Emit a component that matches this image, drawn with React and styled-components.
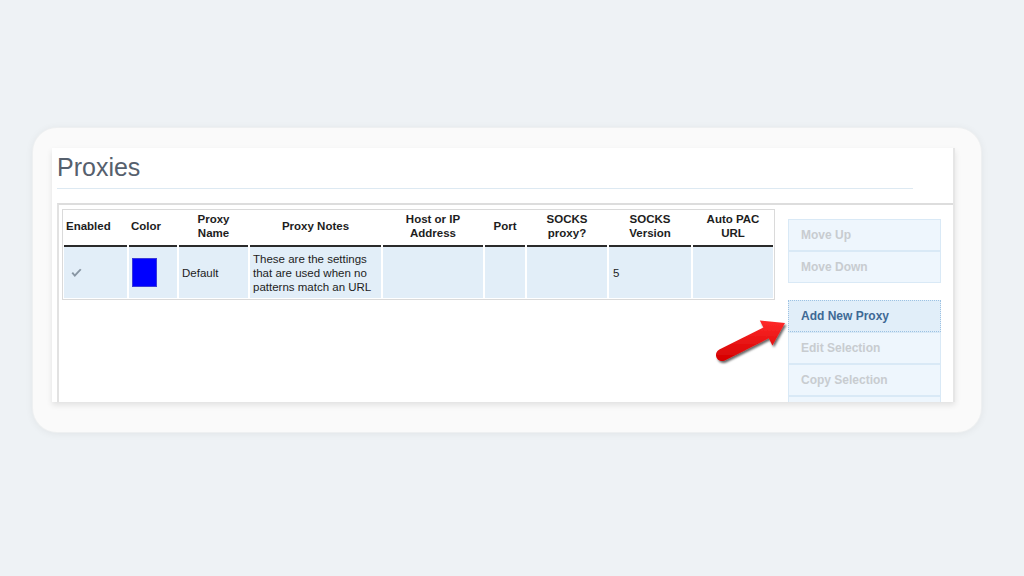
import React from "react";
import styled, { createGlobalStyle } from "styled-components";

const Global = createGlobalStyle`
  html, body { margin: 0; padding: 0; background: #eef2f5; }
  body { font-family: "Liberation Sans", Arial, sans-serif; }
`;

const Page = styled.div`
  width: 1024px;
  height: 576px;
  box-sizing: border-box;
  padding: 128px 0 0 33px;
  background: #eef2f5;
  overflow: hidden;
`;

const Frame = styled.div`
  width: 948px;
  height: 304px;
  box-sizing: border-box;
  padding: 20px 0 0 19px;
  background: #fafafa;
  border-radius: 24px;
  box-shadow: 0 0 0 1px #eef0f1, 0 1px 8px rgba(0, 0, 0, 0.07);
`;

const Shot = styled.div`
  position: relative;
  width: 903px;
  height: 254px;
  box-sizing: border-box;
  padding: 4px 0 0 5px;
  background: #ffffff;
  border-right: 2px solid #e6e6e6;
  overflow: hidden;
  box-shadow: 0 3px 6px rgba(0, 0, 0, 0.1);
`;

const Title = styled.h1`
  margin: 0;
  width: 856px;
  padding: 0 0 6px 0;
  font-family: "Liberation Sans", Arial, sans-serif;
  font-weight: normal;
  font-size: 25px;
  line-height: 30px;
  color: #56606d;
  border-bottom: 1px solid #dde9f2;
`;

const Panel = styled.div`
  margin-top: 14px;
  border-top: 2px solid #dddddd;
  border-left: 2px solid #e2e2e2;
  padding: 4px 0 0 3px;
  display: flex;
  align-items: flex-start;
  gap: 13px;
  height: 240px;
`;

const Table = styled.div`
  border: 1px solid #dadada;
  padding: 0 1px 1px 1px;
  background: #ffffff;
  display: grid;
  grid-template-columns: 63px 48px 69px 131px 100px 40px 80px 82px 80px;
  column-gap: 2px;
`;

const Head = styled.div`
  height: 35px;
  box-sizing: border-box;
  border-bottom: 2px solid #2a2a2a;
  display: flex;
  align-items: center;
  justify-content: ${(p) => (p.$left ? "flex-start" : "center")};
  padding: 0 0 4px ${(p) => (p.$left ? "2px" : "0")};
  height: 37px;
  text-align: center;
  font-size: 11.5px;
  font-weight: bold;
  line-height: 14px;
  color: #1d1d1d;
`;

const Cell = styled.div`
  height: 51px;
  box-sizing: border-box;
  background: #e2eef8;
  display: flex;
  align-items: center;
  justify-content: flex-start;
  padding-left: ${(p) => p.$pad || 3}px;
  font-size: 11.5px;
  line-height: 14px;
  color: #1d1d1d;
`;

const Swatch = styled.span`
  display: block;
  width: 25px;
  height: 29px;
  background: #0000ff;
  border: 1px solid #3a3ad8;
  box-sizing: border-box;
`;

const Buttons = styled.div`
  margin-top: 10px;
  width: 153px;
  display: flex;
  flex-direction: column;
  gap: 17px;
`;

const Group = styled.div`
  display: flex;
  flex-direction: column;
`;

const Btn = styled.div`
  height: 32px;
  box-sizing: border-box;
  padding-left: 12px;
  display: flex;
  align-items: center;
  font-size: 12px;
  font-weight: bold;
  background: ${(p) => (p.$active ? "#e1eef9" : "#eef6fd")};
  border: 1px ${(p) => (p.$active ? "dotted #9cc2e3" : "solid #d9e9f6")};
  color: ${(p) => (p.$active ? "#3e6995" : "#c8ccd0")};
`;

const Arrow = styled.svg`
  position: absolute;
  left: 666px;
  top: 170px;
  width: 74px;
  height: 50px;
  overflow: visible;
`;

const Check = () => (
  <svg width="11" height="10" viewBox="0 0 11 10">
    <path d="M0.5 5.2 L3.8 9 L10.5 1.8 L9 0.8 L3.8 6.2 L2 4 Z" fill="#8896a3" />
  </svg>
);

export default function App() {
  return (
    <Page>
      <Global />
      <Frame>
        <Shot>
          <Title>Proxies</Title>
          <Panel>
            <Table>
              <Head $left>Enabled</Head>
              <Head $left>Color</Head>
              <Head>Proxy<br />Name</Head>
              <Head>Proxy Notes</Head>
              <Head>Host or IP<br />Address</Head>
              <Head>Port</Head>
              <Head>SOCKS<br />proxy?</Head>
              <Head>SOCKS<br />Version</Head>
              <Head>Auto PAC<br />URL</Head>

              <Cell $pad={7}><Check /></Cell>
              <Cell $pad={3}><Swatch /></Cell>
              <Cell $pad={3}>Default</Cell>
              <Cell $pad={3}>
                These are the settings<br />that are used when no<br />patterns match an URL
              </Cell>
              <Cell />
              <Cell />
              <Cell />
              <Cell $pad={4}>5</Cell>
              <Cell />
            </Table>
            <Buttons>
              <Group>
                <Btn>Move Up</Btn>
                <Btn>Move Down</Btn>
              </Group>
              <Group>
                <Btn $active>Add New Proxy</Btn>
                <Btn>Edit Selection</Btn>
                <Btn>Copy Selection</Btn>
                <Btn />
              </Group>
            </Buttons>
          </Panel>
          <Arrow viewBox="0 0 74 50">
            <defs>
              <linearGradient id="ag" x1="0" y1="0" x2="0" y2="1">
                <stop offset="0" stopColor="#ff2a2a" />
                <stop offset="1" stopColor="#d40000" />
              </linearGradient>
              <filter id="sh" x="-20%" y="-20%" width="150%" height="150%">
                <feDropShadow dx="1.5" dy="2" stdDeviation="1.2" floodColor="#000" floodOpacity="0.6" />
              </filter>
            </defs>
            <path
              d="M1.3 31.6 L45.4 9.5 L41.8 2.4 L67 5 L54.4 27.4 L50.8 20.3 L6.7 42.4 A6 6 0 0 1 1.3 31.6 Z"
              fill="url(#ag)"
              filter="url(#sh)"
            />
          </Arrow>
        </Shot>
      </Frame>
    </Page>
  );
}
